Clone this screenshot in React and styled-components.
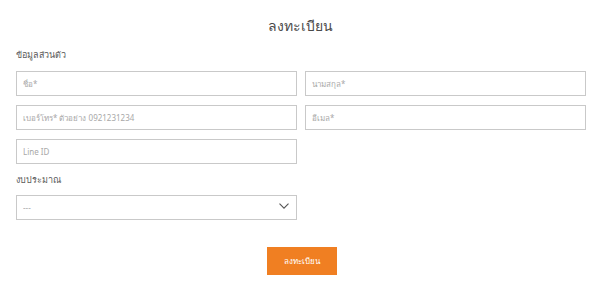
import React from 'react'
import styled, { createGlobalStyle } from 'styled-components'

const GlobalStyle = createGlobalStyle`
  html, body {
    margin: 0;
    padding: 0;
    background: #fff;
  }
  body {
    font-family: "Noto Sans", "Liberation Sans", sans-serif;
    color: #333;
  }
`

const Page = styled.form`
  width: 600px;
  box-sizing: border-box;
  padding: 15px 15px 0 16px;
`

const Title = styled.h2`
  margin: 0 0 12px;
  text-align: center;
  font-size: 14px;
  font-weight: 400;
  line-height: 22px;
  color: #4a4a4a;
`

const SectionLabel = styled.div`
  font-size: 9px;
  line-height: 12px;
  color: #5a5a5a;
  margin: ${p => p.$top || 0}px 0 ${p => p.$bottom || 10}px;
`

const Grid = styled.div`
  display: grid;
  grid-template-columns: 281px 281px;
  column-gap: 8px;
  row-gap: 9px;
`

const Field = styled.input`
  box-sizing: border-box;
  width: 100%;
  height: 25px;
  border: 1px solid #c9c9c9;
  padding: 0 6px;
  font-family: inherit;
  font-size: 8px;
  color: #333;
  outline: none;
  &::placeholder {
    color: #a8a8a8;
  }
`

const SelectWrap = styled.div`
  position: relative;
  width: 281px;
  height: 25px;
`

const Select = styled.select`
  appearance: none;
  box-sizing: border-box;
  width: 100%;
  height: 100%;
  border: 1px solid #c9c9c9;
  background: #fff;
  padding: 0 6px;
  font-family: inherit;
  font-size: 8px;
  color: #a8a8a8;
  outline: none;
`

const Chevron = styled.svg`
  position: absolute;
  right: 8px;
  top: 9px;
  pointer-events: none;
`

const Actions = styled.div`
  display: flex;
  justify-content: center;
  padding: 28px 0 0 2px;
`

const Submit = styled.button`
  width: 70px;
  height: 28px;
  border: none;
  background: #f07f22;
  color: #fff;
  font-family: inherit;
  font-size: 8px;
  cursor: pointer;
`

export default function App() {
  return (
    <>
      <GlobalStyle />
      <Page onSubmit={e => e.preventDefault()}>
        <Title>ลงทะเบียน</Title>
        <SectionLabel>ข้อมูลส่วนตัว</SectionLabel>
        <Grid>
          <Field placeholder="ชื่อ*" />
          <Field placeholder="นามสกุล*" />
          <Field placeholder="เบอร์โทร* ตัวอย่าง 0921231234" />
          <Field placeholder="อีเมล*" />
          <Field placeholder="Line ID" />
        </Grid>
        <SectionLabel $top={10} $bottom={8}>งบประมาณ</SectionLabel>
        <SelectWrap>
          <Select defaultValue="">
            <option value="">---</option>
          </Select>
          <Chevron width="10" height="6" viewBox="0 0 10 6">
            <path d="M0.5 0.6 L5 5.1 L9.5 0.6" fill="none" stroke="#555" strokeWidth="1.1" />
          </Chevron>
        </SelectWrap>
        <Actions>
          <Submit type="submit">ลงทะเบียน</Submit>
        </Actions>
      </Page>
    </>
  )
}
